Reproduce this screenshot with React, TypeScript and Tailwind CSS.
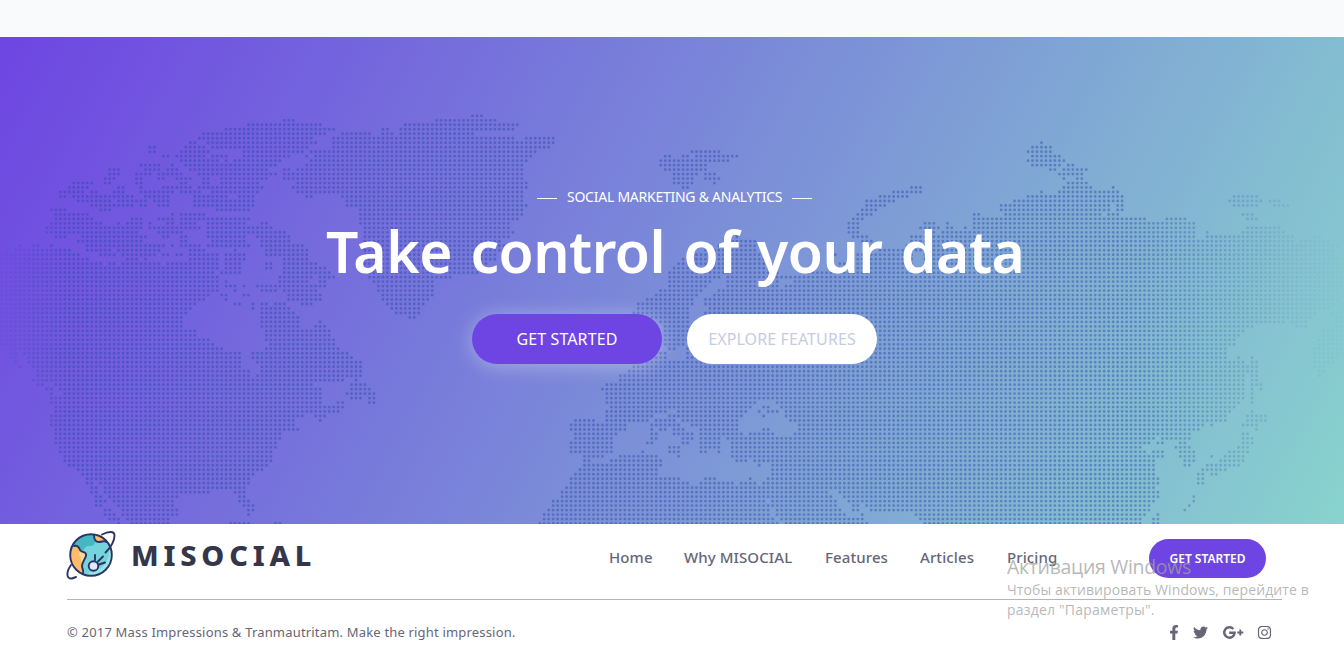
import React from "react";
import { FaFacebookF, FaTwitter, FaInstagram } from "react-icons/fa";

// Land runs: "row: start-end, ..." in map units (a third of a pixel).
const LAND = `
-1:1417-1447
0:850-885,1308-1490
1:742-965,1213-1557
2:675-1005,1145-1165,1200-1540
3:608-980,1025-1112,1145-1180,1200-1420
4:595-610,620-940,998-1540,1575-1665
5:568-590,620-950,998-1665,3125
6:447-465,555-605,635-925,998-1640,3097-3155
7:447-465,540-630,728-910,930-1608,2075-2160,3083-3155
8:488-505,527-545,555-615,635-685,728-870,918,945-1590,1995-2010,2048-2065,2088-2215,3097-3180
9:540-655,675,700-845,930-1580,1980-2025,2035-2190,3083-3195
10:420-480,515,555-605,620-820,918-1570,1980-2120,3097-3180,3200-3220
11:327-360,433-480,500-530,568-800,850-870,890-1570,1995-2110,3150-3170,3190-3260
12:327-355,405-425,433-455,475-505,515-545,595-820,850-1570,2020-2095,2115-2145,3177-3250
13:313-345,405-425,475-490,527-575,608-630,660-800,850-865,877-1570,2020-2080,2115-2160,3190,3230-3250
14:218-275,313-330,405-425,540-560,608-630,662-775,890-1585,2020-2080,2140,3200-3260
15:205-265,353-370,420,487-520,527-575,595-655,662-790,877-1585,2048-2065,2735-2765,3190-3275,3340
16:178-250,272-290,340-375,420-520,540-600,635-700,715-775,890-1560,2680-2765,3125,3177-3355
17:178-195,218-265,272-300,313-400,433-490,505,580-685,715-760,918-940,1025-1560,2635-2725,3083-3370,3700-3775
18:232-330,353-385,393-410,420-440,460-510,580-760,1038-1560,2605-2680,3043-3370,3688-3785,3810-3840
19:272-400,420-440,475-505,580-760,1038-1575,2600-2655,3002-3330,3350-3370,3700-3775,3820-3865
20:152-195,300-330,648-750,1080-1570,2585-2630,3002-3320,3350-3370
21:165-265,515,540-615,1080-1560,2570-2615,2920-2940,3015-3305,3325-3355,3730-3760
22:165-280,393-425,475-520,540-615,620-750,1080-1555,2558-2590,2920-3440,3500-3560,3743-3775
23:152-180,190-305,353,380-425,447,500-520,540-590,620-735,780-800,1080-1530,2545-2575,2770-2805,2840,2920-3585
24:140-210,218-330,340-425,447-480,487-530,540-600,620-760,768-815,1090-1530,2545-2575,2760-2820,2840-2860,2895,2920-3585,3743-3840
25:140-180,190-345,353-410,475-500,515-545,620-760,768-850,1090-1540,2545-2575,2770-2805,2825-3585,3620,3728-3855
26:165-200,245-430,487-505,540-560,620-735,768-870,1090-1530,2205-2215,2558-2595,2735-2880,2890-3585,3620-3880,3940-3960
27:232-425,540-560,635-735,780-870,1090-1500,2200-2260,2585-2620,2735-3880,3900-3985
28:60,98-115,152,258-490,515,540-560,568-600,620-750,780-910,1090-1510,2160-2260,2640,2720-4005
29:20,45-210,258-330,353-475,568-615,700,795-925,1090-1500,2120-2260,2640-4000
30:0-240,300-345,365-465,487-505,527-545,568-655,675-735,805-925,1090-1490,2080-2280,2505,2560-2740,2770-4000
31:0-265,380-410,433,568-655,675-735,850-925,1090-1480,2050-2290,2560-2740,2770-4005
32:0-305,325-345,365-470,500-560,568-600,608-655,675-720,795-815,850-950,1090-1460,2035-2300,2525-2740,2770-4015
33:0-655,675-720,795-815,850-975,1090-1440,2020-2310,2490-4015
34:0-640,662-720,850-990,1100-1430,2010-2330,2430-4020
35:0-655,838-940,957-1005,1107-1355,2005-2160,2185-4020
36:0-655,675,838-925,957-975,1120-1300,2005-2135,2180-2330,2385-4020
37:0-655,675-710,728,770-960,970,1133-1300,2005-2120,2180-2325,2355-4020
38:0-655,700,780-830,850-950,1133-1300,1980-2105,2150-4010
39:0-625,662-685,728-750,865-965,1145-1290,1965-2090,2140-4010
40:0-615,675,865-965,1145-1280,1940-2080,2115-4010
41:0-590,705-720,755,780-800,820-855,905-940,1160-1265,1915-2070,2115-4000
42:0-575,755,780-870,1173-1260,1915-2065,2128-3990
43:0-560,780-885,1187-1260,1900-2065,2115-3945,4000-4032
44:0-545,780-895,1228-1245,1900-2065,2140-3930,4010-4032
45:0-550,780-895,960,1980-2065,2128-3855,3880-3920,4010-4032
46:0-550,780-895,945-980,1990-2065,2128-3760,3890-3920,4010-4032
47:0-590,795-990,1995-2060,2128-3730,3975-4032
48:0-590,795-990,1995-2060,2128-3720,3965-4032
49:0-630,795-1005,1995-2060,2128-3705,3955-4032
50:0-20,30-640,810-1005,1995-2050,2128-3705,3955-4032
51:30-45,58-670,795-1020,2010-2025,2065-3680,3943-4032
52:30-40,72-720,755-1045,1955-1990,2060-3670,3943-4025
53:30-40,85-720,755-1060,1945-1990,2060-3680,3715,3756,3943-4005
54:45,85-720,770-1075,1920-3735,3756-3775,3943-4000
55:58,98-725,780-1085,1900-3735,3745,3756-3775,3943-3970
56:110-740,780-1085,1885-3735,3745,3756-3775,3955-3970
57:110-750,770-1085,1860-3735,3756-3772,3955
58:98-1030,1065,1860-3735,3756-3772
59:110-130,165-940,1050-1100,1817-3735,3756-3785
60:138-155,178-965,1050-1115,1805-3735,3756,3785
61:152,190-965,1038-1125,1817-3735,3756
62:152-965,1050-1085,1105-1125,1817-3725,3756
63:152-965,1010-1030,1105-1125,1817-2260,2330,2345-3715,3756
64:165-1030,1830-2250,2290-2310,2345-3705
65:165-1020,1817-1990,2030-2235,2275,2305-2335,2360-3690,3756
66:152-910,945-980,1817-1960,2010-2035,2050-2225,2290,2360-3680,3743-3800
67:152-885,960,1725-1780,1817-1935,1965-2025,2050-2210,2370-3680,3743-3800
68:152-885,1710-1880,1955-1970,1980-2030,2075-2210,2395-3610,3635,3730-3770
69:165-895,1710-1875,1955-1960,1980-2000,2020-2055,2100-2210,2290-2305,2395-3590,3770
70:165-845,1725-1850,1955-1970,2020-2040,2050-2080,2100-2220,2245-2320,2385-3570,3730-3745
71:165-845,1725-1835,1955-1970,2050-2070,2100-2160,2180-3455,3485-3570,3730-3755
72:165-830,1710-1835,1940-1955,2050-2065,2100-2155,2195-3450,3470-3490,3540-3560,3730-3755
73:178-795,810-820,1710-1835,2010-2040,2100-2155,2195-3425,3525-3570,3715-3745
74:178-815,1710-1835,1927,2010-2040,2100-2115,2155,2195-3435,3460-3490,3540-3585,3690-3745
75:190-815,1750-1810,1860-1975,2035,2195-3440,3450-3490,3540-3585,3635,3675-3730
76:190-815,1750-1770,1830-1985,2210-2240,2265-3460,3550-3585,3660-3730
77:205-805,1750-1985,2280,2320-3460,3550-3570,3620-3720
78:232-790,1735-1975,2320-3460,3605-3680
79:245-765,1723-1975,2320-3460,3595-3610,3635-3650
80:258-750,1710-2040,2115-2145,2250,2305-3475,3595-3610
81:258-280,300-740,1710-2065,2100-2170,2180-2200,2230-2270,2290-3475,3595-3610
82:272-290,313-735,1695-3465
83:272-290,313-630,700-735,1685-2485,2520-3475
84:285-305,325-530,715-735,1680-2495,2530-3475,3580
85:285-320,340-520,715-750,1658-2295,2320-2505,2545-3460,3580
86:285-305,353-520,728-760,1658-2300,2320-2510,2555-2575,2595-3450,3570
87:313-330,365-530,740-765,1645-2300,2330-2520,2560-2575,2610-3450,3555
88:313-345,365-530,745,1630-2310,2330-2530,2585,2745-3440,3475
89:325-360,380-510,1630-2320,2345-2550,2560-2590,2760-3425,3460-3475
90:353,393-510,690-750,825-840,1620-2330,2355-2605,2770-3415,3460-3475
`;

const PITCH = 13.44;
const dots = LAND.trim()
  .split("\n")
  .map((line) => {
    const at = line.indexOf(":");
    const y = (250 + Number(line.slice(0, at)) * PITCH).toFixed(1);
    return line
      .slice(at + 1)
      .split(",")
      .map((run) => {
        const [from, to = from] = run.split("-").map(Number);
        const first = Math.round((from - 6.3) / PITCH);
        const last = Math.max(first, Math.round((to - 6.3) / PITCH));
        let d = "";
        for (let c = first; c <= last; c++) d += `M${(6.3 + c * PITCH).toFixed(1)} ${y}h0`;
        return d;
      })
      .join("");
  })
  .join("");

function WorldMap() {
  return (
    <svg className="absolute inset-0 h-full w-full" viewBox="0 0 4032 1461" aria-hidden="true">
      <defs>
        <linearGradient id="fade">
          <stop offset="0" stopColor="#fff" stopOpacity="0.15" />
          <stop offset="0.05" stopColor="#fff" stopOpacity="1" />
          <stop offset="0.84" stopColor="#fff" stopOpacity="1" />
          <stop offset="0.97" stopColor="#fff" stopOpacity="0.15" />
          <stop offset="1" stopColor="#fff" stopOpacity="0.05" />
        </linearGradient>
        <mask id="edges" maskUnits="userSpaceOnUse" x="0" y="0" width="4032" height="1461">
          <rect width="4032" height="1461" fill="url(#fade)" />
        </mask>
      </defs>
      <g mask="url(#edges)">
        <path d={dots} stroke="#2846a5" strokeOpacity="0.43" strokeWidth="8.6" strokeLinecap="round" />
      </g>
    </svg>
  );
}

function Logo() {
  return (
    <svg className="-ml-px h-[50px] w-[50px]" viewBox="0 0 50 50" fill="none" strokeLinecap="round" strokeLinejoin="round">
      <circle cx="25" cy="25" r="21" fill="#75d3dc" />
      <path d="M31 5C19 2 10 9 7 15l4 3 3 3c5 0 4-5 9-5s6-2 6-5z" fill="#45b6c4" />
      <path d="M42 13c5 14-4 28-18 29l-3 4c20 2 31-17 21-33z" fill="#9be4e6" />
      <path d="M8 16c3-1 5 1 6 4 2 3 5 1 6 4 1 4-4 7-4 12 0 3 2 4 1 7C6 39 1 27 8 16z" fill="#ffbd6b" />
      <path d="M14 20c2 3 5 1 6 4 1 4-4 7-4 12-2-5 0-9-3-11z" fill="#ffd796" />
      <path d="M28 5c0 5 2 7 5 7s5-2 9 0c-4-5-8-7-14-7z" fill="#ffbd6b" />
      <g stroke="#2c3463" strokeWidth="1.9">
        <circle cx="25" cy="25" r="20.8" />
        <path d="M8 16c3-1 5 1 6 4 2 3 5 1 6 4 1 4-4 7-4 12 0 3 2 4 1 7" />
        <path d="M28 5c0 5 2 7 5 7s5-2 8 0" />
        <path d="M36 4.500c7-3.500 12.500-3.500 12.500 1 0 5-3 11-9 17" />
        <path d="M5 35c-5 7-5 14 1 13.500l4-1.500" />
        <circle cx="27.500" cy="36" r="4.800" fill="#dfe8ff" />
        <path d="M29 30l0-5M32 31.500l5-5M33 34.500l6-2" />
      </g>
    </svg>
  );
}

function GooglePlus() {
  return (
    <svg className="mr-[13px] h-[15px] w-[22px]" viewBox="0 0 22 15" fill="none" stroke="currentColor">
      <path d="M11.300 4A5.200 5.200 0 1 0 12.600 7.700H7.200" strokeWidth="2.500" />
      <path d="M18.300 4.500v6M15.300 7.500h6" strokeWidth="1.900" />
    </svg>
  );
}

function Line({ children, className }: { children: React.ReactNode; className: string }) {
  return <span className={"block shrink-0 whitespace-nowrap " + className}>{children}</span>;
}

export default function App() {
  return (
    <div className="relative flex h-[654px] w-[1344px] flex-col overflow-hidden bg-white font-['Noto_Sans','Open_Sans',sans-serif]">
      <div className="h-[37px] shrink-0 bg-[#f8fafc]" />
      <section className="relative h-[487px] shrink-0 bg-[linear-gradient(118deg,#6e45e2_0%,#88d3ce_100%)]">
        <WorldMap />
        <div className="relative flex flex-col items-center pl-[5px] pt-[150px] text-white">
          <div className="flex h-5 items-center gap-[10px]">
            <span className="mt-[3px] h-px w-5 bg-white" />
            <Line className="w-[215px] text-[14px] leading-5 tracking-[-0.25px]">SOCIAL MARKETING &amp; ANALYTICS</Line>
            <span className="mt-[3px] h-px w-5 bg-white" />
          </div>
          <h1 className="mt-[9px] w-[697px] whitespace-nowrap text-[57px] font-semibold leading-[70px] tracking-[-0.500px] [word-spacing:4px]">
            Take control of your data
          </h1>
          <div className="mt-[28px] flex gap-[25px]">
            <button className="flex h-[50px] w-[190px] items-center justify-center rounded-full bg-[#6e45e2] text-[16px] tracking-[0.1px] shadow-[0_2px_20px_rgba(255,255,255,0.35)]">
              GET STARTED
            </button>
            <button className="flex h-[50px] w-[190px] items-center justify-center rounded-full bg-white text-[16px] tracking-[0.1px] text-[#c4cde0]">
              EXPLORE FEATURES
            </button>
          </div>
        </div>
      </section>
      <footer className="flex flex-col pl-[67px] pr-[62px] text-[#666677]">
        <div className="flex h-[75px] items-start">
          <div className="flex pt-[6px]">
            <Logo />
            <Line className="ml-[15px] w-[190px] text-[29px] font-extrabold leading-[50px] tracking-[4.800px] text-[#35364a]">MISOCIAL</Line>
          </div>
          <nav className="ml-[288px] flex pt-[20px] text-[15px] font-medium leading-[26px] tracking-[0.100px]">
            <Line className="w-[75px]">Home</Line>
            <Line className="w-[141px]">Why MISOCIAL</Line>
            <Line className="w-[95px]">Features</Line>
            <Line className="w-[87px]">Articles</Line>
            <Line className="w-[142px]">Pricing</Line>
          </nav>
          <button className="mt-[15px] flex h-[39px] w-[117px] items-center justify-center whitespace-nowrap rounded-full bg-[#6e45e2] text-[12px] font-semibold text-white">
            <span className="pt-px">GET STARTED</span>
          </button>
        </div>
        <div className="flex h-[55px] items-start justify-between border-t border-[#b5b5b9]">
          <p className="pt-[22px] text-[13px] leading-5 tracking-[0.180px]">© 2017 Mass Impressions &amp; Tranmautritam. Make the right impression.</p>
          <div className="flex pr-[10px] pt-[25px]">
            <FaFacebookF className="mr-[13px] h-[15px] w-[12px]" />
            <FaTwitter className="mr-[14px] h-[15px] w-[15px]" />
            <GooglePlus />
            <FaInstagram className="h-[15px] w-[15px]" />
          </div>
        </div>
      </footer>
      <div className="absolute left-[1007px] top-[554px] whitespace-nowrap font-['Open_Sans','Noto_Sans',sans-serif] text-[#a0a0a0]/75">
        <p className="text-[19.500px] leading-[26px] tracking-[-0.320px]">Активация Windows</p>
        <p className="text-[14px] leading-[20px] tracking-[0.100px]">Чтобы активировать Windows, перейдите в</p>
        <p className="text-[14px] leading-[20px] tracking-[0.200px]">раздел "Параметры".</p>
      </div>
    </div>
  );
}
